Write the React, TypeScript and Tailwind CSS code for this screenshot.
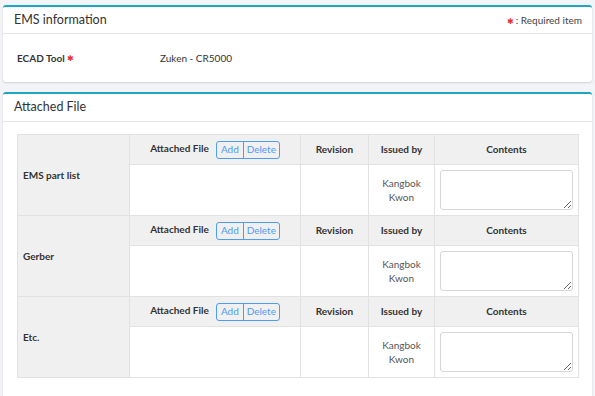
import React from "react";

const font = { fontFamily: 'Lato, "Noto Sans", sans-serif' };

function Star() {
  return <span className="text-[#f0302a] font-normal text-[8px] relative top-[-1px] ml-[2px]">✱</span>;
}

function Group({ label }: { label: string }) {
  return (
    <>
      <tr className="h-[30px]">
        <th rowSpan={2} className="border border-[#e2e2e2] bg-[#f0f0f0] text-left font-bold text-[10px] text-[#333] pl-[5px] align-middle">
          {label}
        </th>
        <th className="border border-[#e2e2e2] bg-[#f0f0f0] font-bold text-[10px] text-[#333] align-middle">
          <div className="flex items-center justify-center gap-[7px]">
            <span className="-mt-[2px]">Attached File</span>
            <div className="flex h-[18px] rounded-[3px] border border-[#4d9cf5] text-[#4d9cf5] font-normal text-[10px] overflow-hidden">
              <span className="w-[27px] flex items-center justify-center border-r border-[#4d9cf5]">Add</span>
              <span className="w-[35px] flex items-center justify-center">Delete</span>
            </div>
          </div>
        </th>
        <th className="border border-[#e2e2e2] bg-[#f0f0f0] font-bold text-[10px] text-[#333] align-middle">Revision</th>
        <th className="border border-[#e2e2e2] bg-[#f0f0f0] font-bold text-[10px] text-[#333] align-middle">Issued by</th>
        <th className="border border-[#e2e2e2] bg-[#f0f0f0] font-bold text-[10px] text-[#333] align-middle">Contents</th>
      </tr>
      <tr className="h-[51px]">
        <td className="border border-[#e2e2e2] bg-white"></td>
        <td className="border border-[#e2e2e2] bg-white"></td>
        <td className="border border-[#e2e2e2] bg-white text-center text-[10px] leading-[14px] text-[#555] align-middle">
          Kangbok
          <br />
          Kwon
        </td>
        <td className="border border-[#e2e2e2] bg-white px-[5px] align-middle">
          <textarea className="block w-full h-[40px] rounded-[3px] border border-[#d6d6d6] bg-white resize-y" />
        </td>
      </tr>
    </>
  );
}

export default function App() {
  return (
    <div style={font} className="w-[595px] h-[396px] overflow-hidden bg-[#f3f4f8] px-[3px] pt-[5px] text-[#333]">
      <div className="bg-white rounded-[3px] border-t-2 border-[#1ca6bf] shadow-[0_1px_2px_rgba(0,0,0,0.15)]">
        <div className="h-[27px] border-b border-[#e6e6e6] flex items-center justify-between pl-[11px] pr-[10px]">
          <span className="text-[12.5px] text-[#333] mt-[1px]">EMS information</span>
          <span className="text-[10px] text-[#444] mt-[1px] flex items-center">
            <span className="text-[#f0302a] text-[8px] mr-[2px]">✱</span>: Required item
          </span>
        </div>
        <div className="h-[48px] flex items-center pl-[14px]">
          <span className="w-[143px] text-[10px] font-bold text-[#333]">
            ECAD Tool
            <Star />
          </span>
          <span className="text-[10px] text-[#333]">Zuken - CR5000</span>
        </div>
      </div>
      <div className="mt-[10px] bg-white rounded-[3px] border-t-2 border-[#1ca6bf] shadow-[0_1px_2px_rgba(0,0,0,0.15)] h-[320px]">
        <div className="h-[28px] border-b border-[#e6e6e6] flex items-center pl-[11px]">
          <span className="text-[12.5px] text-[#333]">Attached File</span>
        </div>
        <div className="px-[14px] pt-[12px]">
          <table className="w-[561px] table-fixed border-collapse">
            <colgroup>
              <col className="w-[112px]" />
              <col className="w-[171px]" />
              <col className="w-[68px]" />
              <col className="w-[66px]" />
              <col className="w-[144px]" />
            </colgroup>
            <tbody>
              <Group label="EMS part list" />
              <Group label="Gerber" />
              <Group label="Etc." />
            </tbody>
          </table>
        </div>
      </div>
    </div>
  );
}
